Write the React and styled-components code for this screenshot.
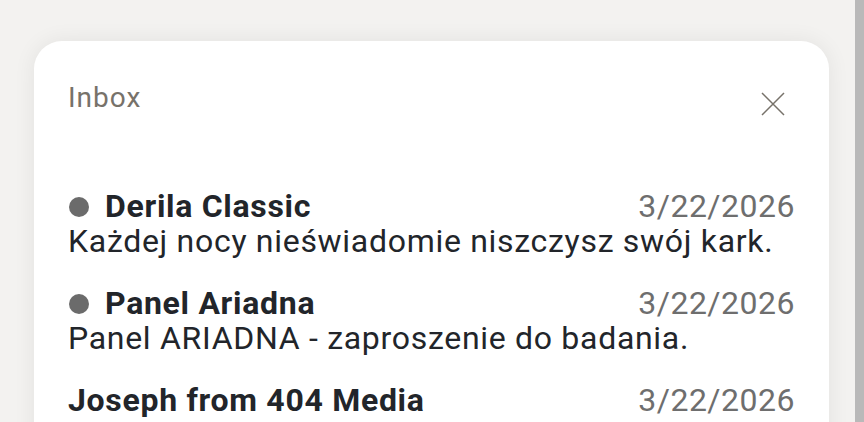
import styled, { createGlobalStyle } from 'styled-components'

const GlobalStyle = createGlobalStyle`
  html, body {
    margin: 0;
    padding: 0;
    height: 100%;
    overflow: hidden;
  }
  body {
    background-color: #f3f2f0;
    font-family: Roboto, "Noto Sans", sans-serif;
  }
`;

const Page = styled.div`
  display: flex;
  height: 422px;
  width: 864px;
`;

const Main = styled.div`
  flex: 1;
  padding: 41px 26px 0 34px;
  overflow: hidden;
`;

const Scrollbar = styled.div`
  width: 9px;
  background-color: #b9b9b9;
`;

const Card = styled.div`
  background-color: #ffffff;
  border-radius: 28px;
  box-shadow: 0 0 22px rgba(0, 0, 0, 0.07);
  padding: 42px 34px 40px 34px;
  height: 500px;
`;

const Header = styled.div`
  display: flex;
  align-items: center;
  justify-content: space-between;
  height: 30px;
  margin-bottom: 76px;
`;

const Title = styled.h2`
  margin: 0;
  font-size: 28px;
  font-weight: 400;
  line-height: 30px;
  letter-spacing: 1px;
  color: #77726a;
`;

const CloseButton = styled.button`
  border: none;
  background: none;
  padding: 0;
  margin: 12px 10px 0 0;
  width: 24px;
  height: 24px;
  display: flex;
  align-items: center;
  justify-content: center;
  cursor: pointer;
`;

const Item = styled.div`
  margin-bottom: 28px;
`;

const TopRow = styled.div`
  display: flex;
  align-items: center;
  justify-content: space-between;
  line-height: 35px;
`;

const Sender = styled.div`
  display: flex;
  align-items: center;
  gap: 16px;
  font-size: 32px;
  font-weight: 700;
  letter-spacing: 0.7px;
  color: #22252a;
`;

const Dot = styled.span`
  width: 20px;
  height: 20px;
  border-radius: 50%;
  background-color: #6b6b6b;
  margin-left: 1px;
`;

const Date = styled.div`
  font-size: 32px;
  letter-spacing: 0.5px;
  color: #6e6e6e;
`;

const Subject = styled.div`
  font-size: 32px;
  line-height: 34px;
  letter-spacing: 0.7px;
  color: #22252a;
  white-space: nowrap;
`;

const messages = [
  { from: 'Derila Classic', date: '3/22/2026', subject: 'Każdej nocy nieświadomie niszczysz swój kark.', unread: true },
  { from: 'Panel Ariadna', date: '3/22/2026', subject: 'Panel ARIADNA - zaproszenie do badania.', unread: true },
  { from: 'Joseph from 404 Media', date: '3/22/2026', subject: 'The internet is running out of space', unread: false },
]

function App() {
  return (
    <>
      <GlobalStyle />
      <Page>
        <Main>
          <Card>
            <Header>
              <Title>Inbox</Title>
              <CloseButton aria-label="Close">
                <svg width="24" height="24" viewBox="0 0 24 24">
                  <path d="M1 1 L23 23 M23 1 L1 23" stroke="#77726a" strokeWidth="1.5" fill="none" />
                </svg>
              </CloseButton>
            </Header>
            {messages.map((m) => (
              <Item key={m.from}>
                <TopRow>
                  <Sender>
                    {m.unread && <Dot />}
                    {m.from}
                  </Sender>
                  <Date>{m.date}</Date>
                </TopRow>
                <Subject>{m.subject}</Subject>
              </Item>
            ))}
          </Card>
        </Main>
        <Scrollbar />
      </Page>
    </>
  )
}

export default App
